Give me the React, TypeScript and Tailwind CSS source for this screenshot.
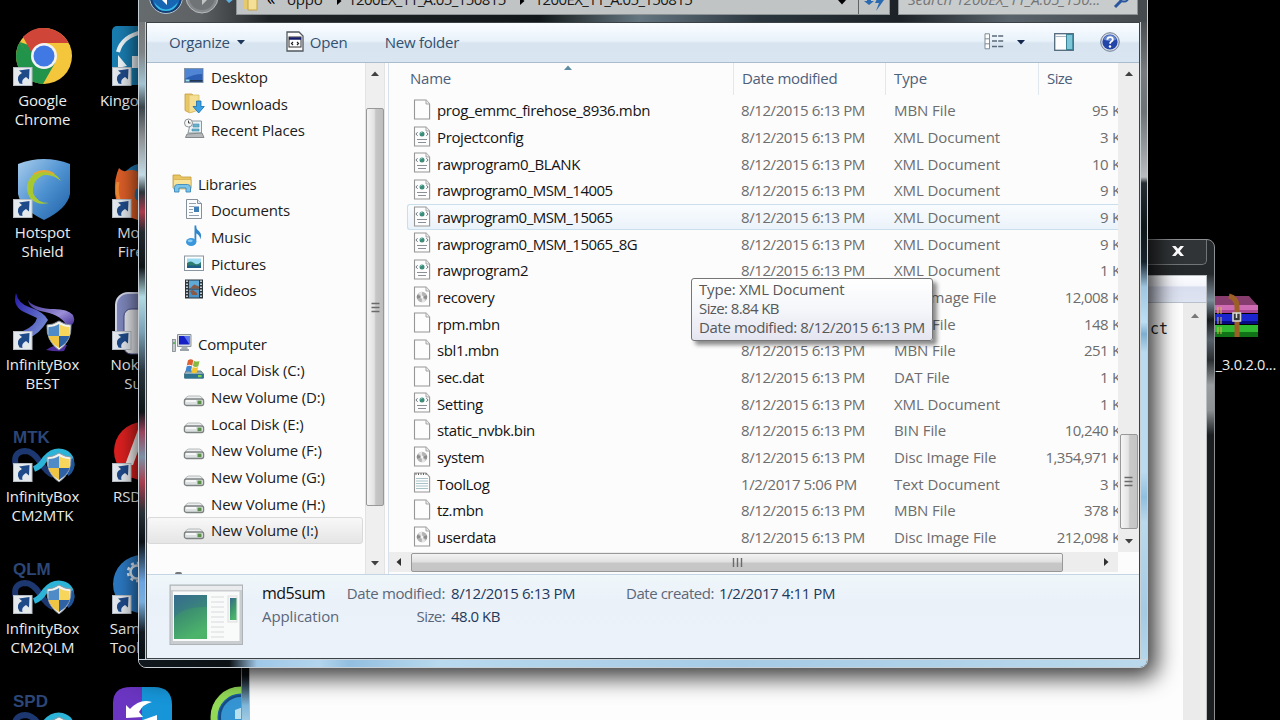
import type { ReactNode } from "react";

type FileKind = "blank" | "xml" | "disc" | "text";
type FileRow = { name: string; kind: FileKind; date: string; type: string; size: string };

const D = "8/12/2015 6:13 PM";

const files: FileRow[] = [
  { name: "prog_emmc_firehose_8936.mbn", kind: "blank", date: D, type: "MBN File", size: "95" },
  { name: "Projectconfig", kind: "xml", date: D, type: "XML Document", size: "3" },
  { name: "rawprogram0_BLANK", kind: "xml", date: D, type: "XML Document", size: "10" },
  { name: "rawprogram0_MSM_14005", kind: "xml", date: D, type: "XML Document", size: "9" },
  { name: "rawprogram0_MSM_15065", kind: "xml", date: D, type: "XML Document", size: "9" },
  { name: "rawprogram0_MSM_15065_8G", kind: "xml", date: D, type: "XML Document", size: "9" },
  { name: "rawprogram2", kind: "xml", date: D, type: "XML Document", size: "1" },
  { name: "recovery", kind: "disc", date: D, type: "Disc Image File", size: "12,008" },
  { name: "rpm.mbn", kind: "blank", date: D, type: "MBN File", size: "148" },
  { name: "sbl1.mbn", kind: "blank", date: D, type: "MBN File", size: "251" },
  { name: "sec.dat", kind: "blank", date: D, type: "DAT File", size: "1" },
  { name: "Setting", kind: "xml", date: D, type: "XML Document", size: "1" },
  { name: "static_nvbk.bin", kind: "blank", date: D, type: "BIN File", size: "10,240" },
  { name: "system", kind: "disc", date: D, type: "Disc Image File", size: "1,354,971" },
  { name: "ToolLog", kind: "text", date: "1/2/2017 5:06 PM", type: "Text Document", size: "3" },
  { name: "tz.mbn", kind: "blank", date: D, type: "MBN File", size: "378" },
  { name: "userdata", kind: "disc", date: D, type: "Disc Image File", size: "212,098" },
];

function FileIcon({ kind }: { kind: FileKind }) {
  return (
    <svg className="h-[21px] w-[18px] shrink-0" viewBox="0 0 18 21">
      <path d="M1.5 1h11.5l3.6 4v15H1.5z" fill="#fdfdfd" stroke="#969696" strokeWidth="1.1" />
      {kind !== "text" && <path d="M13 1v4h3.6" fill="#eee" stroke="#a5a5a5" />}
      {kind === "xml" && (
        <>
          <path d="M4.600 6.200 2.900 8l1.700 1.800M13.400 6.200 15.100 8l-1.700 1.800" fill="none" stroke="#66727d" strokeWidth="1" />
          <circle cx="9" cy="8" r="2.500" fill="#3b8c78" />
          <path d="M7.400 7.400a2 2 0 0 1 2-1.300" stroke="#a8d9e0" fill="none" />
          <path d="M4 13.500h10M5 16.500h8" stroke="#8b8f98" strokeWidth="1.200" />
        </>
      )}
      {kind === "disc" && (
        <>
          <circle cx="9" cy="11" r="5.200" fill="#b4b4b4" />
          <path d="M9 11 5.200 7.200a5.400 5.400 0 0 1 4-1.500zM9 11l3.800 3.800a5.400 5.400 0 0 1-4 1.500z" fill="#e3e3e3" />
          <path d="M9 11 14 9.300a5.400 5.400 0 0 1-.400 4zM9 11 4 12.800a5.400 5.400 0 0 1 .200-4z" fill="#8b8b8b" />
          <circle cx="9" cy="11" r="1.500" fill="#f4f4f4" />
        </>
      )}
      {kind === "text" && (
        <>
          <path d="M3 1v2M5.500 1v2M8 1v2M10.500 1v2M13 1v2" stroke="#666" />
          <path d="M3 6.500h12M3 9h12M3 11.500h12M3 14h12M3 16.500h12" stroke="#a7c3c8" />
        </>
      )}
    </svg>
  );
}

function Drive() {
  return (
    <svg className="h-[22px] w-[22px] shrink-0" viewBox="0 0 22 22">
      <path d="M5.500 10h11q2.500.500 4 4h-19q1.500-3.500 4-4z" fill="#eceeee" stroke="#a6abab" strokeWidth=".8" />
      <rect x="1.400" y="13" width="19.200" height="6.500" rx="2" fill="#dde0e0" stroke="#7d8282" strokeWidth="1.300" />
      <path d="M3 15h10" stroke="#fff" strokeWidth="1.500" />
      <rect x="14.500" y="14.600" width="4" height="3.600" fill="#5a9148" />
    </svg>
  );
}

function NavIcon({ name }: { name: string }) {
  if (name === "drive") return <Drive />;
  if (name === "windrive")
    return (
      <svg className="h-[22px] w-[22px] shrink-0" viewBox="0 0 22 22">
        <path d="M3 13h15l2.500 3v4H1.500v-4z" fill="#8fabb5" stroke="#637d86" />
        <path d="M1.500 16h19v4.500h-19z" fill="#2f7391" />
        <rect x="15" y="17" width="3.600" height="2.200" fill="#7fd04d" />
        <path d="M5 2.200q3-1.800 5.300.100L9.200 7.800Q6.500 6 3.800 7.600z" fill="#dc6032" />
        <path d="M11 2.700q2.700 1.600 5.500.200l-1.200 5.400q-2.600 1.400-5.400-.200z" fill="#86b940" />
        <path d="M3.600 8.400q2.800-1.500 5.400.200l-1.200 5.400q-2.600-1.700-5.400-.200z" fill="#3f86cf" />
        <path d="M9.700 9q2.700 1.500 5.400.100l-1.200 5.300q-2.600 1.500-5.400 0z" fill="#f3c531" />
      </svg>
    );
  return (
    <svg className="h-[22px] w-[22px] shrink-0" viewBox="0 0 22 22">
      {name === "desktop" && (
        <>
          <rect x="1.500" y="3.500" width="18.500" height="14" fill="#2c5fb4" stroke="#8293a8" />
          <path d="M2 4h17.500v5Q10 9 2 14z" fill="#4f85d4" />
          <path d="M2 15.800h17.500" stroke="#24374f" strokeWidth="1.600" />
          <path d="M2.500 15.500h4" stroke="#9fe0e9" strokeWidth="2" />
        </>
      )}
      {name === "downloads" && (
        <>
          <path d="M2 2h7l2 2v15.500l-5 1-4-2z" fill="#e8c765" stroke="#c49b3c" strokeWidth=".8" />
          <path d="M6 3h10v15l-10 3z" fill="#f5df93" stroke="#d8bc6b" strokeWidth=".8" />
          <path d="M13.500 9h4.500v5.500h3.300L15.700 21 10 14.500h3.500z" fill="#3aa2e4" stroke="#1c6da8" strokeWidth=".8" />
        </>
      )}
      {name === "recent" && (
        <>
          <path d="M8 3h10.500v12H5z" fill="#e9f1f4" stroke="#8b989f" />
          <path d="M10 6h6v3h-6zM9 11h7v2H9z" fill="#69b2cf" stroke="#3f8aab" strokeWidth=".6" />
          <path d="m4 16 15-1 2 4.500H2.500z" fill="#b4b8bb" stroke="#85898c" />
          <circle cx="5.500" cy="5" r="4" fill="#f7f7f7" stroke="#8c9296" />
          <path d="M5.500 2.600V5h2" stroke="#444" fill="none" />
        </>
      )}
      {name === "libraries" && (
        <>
          <path d="M2 3h7l1.500 2H20v11H2z" fill="#e9c662" stroke="#c2993b" strokeWidth=".8" />
          <path d="M2.500 7.500h17.500V17H2.500z" fill="#f8e39b" stroke="#d2b057" strokeWidth=".8" />
          <path d="M3.500 20v-4.500q0-3 3-3h10q3 0 3 3V20h-4.500v-4H8v4z" fill="#7cc3ea" stroke="#3a88b9" strokeWidth=".9" />
        </>
      )}
      {name === "documents" && (
        <>
          <path d="M3.500 1.500h11l4 4v15h-15z" fill="#fbfcfd" stroke="#85909a" />
          <path d="M14.500 1.500v4h4" fill="#e1e8ee" stroke="#85909a" />
          <path d="M6 5.500h7M6 8.500h5M6 11.500h4M6 14.500h4M6 17.500h10" stroke="#92a2b3" />
          <rect x="11" y="8.500" width="5" height="5.500" fill="#3f7fb5" />
        </>
      )}
      {name === "music" && (
        <>
          <path d="M12.500.500q.300 3.500 3.800 6 3.200 3.500.800 8 .300-4.500-4.600-6.500z" fill="#2f86cc" />
          <rect x="11.500" y=".500" width="1.800" height="16.500" fill="#2f86cc" />
          <ellipse cx="8.200" cy="17" rx="5.200" ry="4" fill="#3a97dc" />
          <ellipse cx="7.200" cy="15.800" rx="2.500" ry="1.400" fill="#8accf3" />
        </>
      )}
      {name === "pictures" && (
        <>
          <rect x="1.500" y="4" width="19" height="14.500" fill="#fff" stroke="#8796a0" />
          <rect x="4" y="6.500" width="14" height="9.500" fill="#9cdcf2" />
          <path d="M4 11q4-3 7 0t7-1v6H4z" fill="#2f7d6f" />
          <path d="M4 13.500h14V16H4z" fill="#1d5c86" />
        </>
      )}
      {name === "videos" && (
        <>
          <rect x="2" y="1.500" width="18" height="19" fill="#2b353c" />
          <rect x="6" y="2.500" width="10" height="8" fill="#5fa9d8" />
          <rect x="6" y="11.500" width="10" height="8" fill="#4c93c8" />
          <path d="M9 8.500l2-2 5 2v2H7zM7 13l3-1 4 3v2H9z" fill="#8a5a48" />
          <path d="M4 2.500v18M18 2.500v18" stroke="#e6edf0" strokeWidth="1.600" strokeDasharray="1.500 1.500" />
        </>
      )}
      {name === "computer" && (
        <>
          <path d="M6.500 2.500H20v12H6.500z" fill="#d4dade" stroke="#8b959c" />
          <rect x="8" y="4" width="10.500" height="8.500" fill="#1620c4" />
          <path d="M13 4h5.500v8.500z" fill="#5b74ee" />
          <path d="M11 14.500h5l1 3h-7z" fill="#a7aeb3" />
          <path d="M9 18h9" stroke="#9aa3a9" strokeWidth="2" />
          <rect x="1.500" y="7.500" width="3" height="12" fill="#c3c9cc" stroke="#80878c" strokeWidth=".8" />
          <path d="M3 10v2" stroke="#45a73f" strokeWidth="1.500" />
        </>
      )}
    </svg>
  );
}

type NavEntry = { icon: string; label: string; root?: boolean; selected?: boolean } | null;

const nav: NavEntry[] = [
  { icon: "desktop", label: "Desktop" },
  { icon: "downloads", label: "Downloads" },
  { icon: "recent", label: "Recent Places" },
  null,
  { icon: "libraries", label: "Libraries", root: true },
  { icon: "documents", label: "Documents" },
  { icon: "music", label: "Music" },
  { icon: "pictures", label: "Pictures" },
  { icon: "videos", label: "Videos" },
  null,
  { icon: "computer", label: "Computer", root: true },
  { icon: "windrive", label: "Local Disk (C:)" },
  { icon: "drive", label: "New Volume (D:)" },
  { icon: "drive", label: "Local Disk (E:)" },
  { icon: "drive", label: "New Volume (F:)" },
  { icon: "drive", label: "New Volume (G:)" },
  { icon: "drive", label: "New Volume (H:)" },
  { icon: "drive", label: "New Volume (I:)", selected: true },
];

function Shield() {
  return (
    <g>
      <path d="M45 29q6 4 12 4 1 16-12 25Q32 49 33 33q6 0 12-4z" fill="#f3f3ee" stroke="#8c98a5" />
      <path d="M45 32v12H34.500q-.500-4 0-9 6 0 10.500-3z" fill="#4f8bc6" />
      <path d="M45 32v12h10.500q.500-4 0-9-6 0-10.500-3z" fill="#f8d65c" />
      <path d="M45 56V44H34.500q2 7 10.500 12z" fill="#f0c544" />
      <path d="M45 56V44h10.500q-2 7-10.500 12z" fill="#2f62a4" />
    </g>
  );
}

function Shortcut() {
  return (
    <g>
      <rect x="-.500" y="39.500" width="18.500" height="18" fill="#e4e9ee" stroke="#b6bcc4" />
      <path d="M5.500 55.500q-4.500-7 2.500-10.500L5 42.500l10.500-1.500-.500 10.500-3-2.500Q7 51.500 8.500 56z" fill="#1f4a8a" />
    </g>
  );
}

function InfinityMark({ label }: { label: string }) {
  return (
    <g fill="none" strokeWidth="6">
      <text x="-1" y="19" className="fill-[#2c4677] font-['Liberation_Sans'] text-[17px] font-bold" stroke="none">
        {label}
      </text>
      <path d="M2 42q-4-14 9-15 8 0 15 11t13 13" stroke="#1d3870" />
      <path d="M20 45q6-2 11-10 8-9 17-7 11 3 9 16" stroke="#2bb4d8" />
      <path d="M57 35q3 10-4 15" stroke="#1f539a" strokeWidth="5" />
    </g>
  );
}

function Art({ children, shortcut = true }: { children: ReactNode; shortcut?: boolean }) {
  return (
    <svg className="h-[58px] w-[60px] shrink-0 overflow-visible" viewBox="0 0 60 58">
      {children}
      {shortcut && <Shortcut />}
    </svg>
  );
}

function Cell({ art, lines }: { art: ReactNode; lines: string[] }) {
  return (
    <div className="flex h-[132px] w-[85px] shrink-0 flex-col items-center">
      <div className="translate-x-[1px]">{art}</div>
      <div className="mt-[5px] text-center text-[15px] leading-[19px] tracking-[-0.1px] whitespace-nowrap text-[#ececec]">
        {lines.map((l) => (
          <div key={l}>{l}</div>
        ))}
      </div>
    </div>
  );
}

function DesktopIcons() {
  return (
    <>
      <div className="absolute top-[28px] left-0 flex flex-col">
        <Cell
          lines={["Google", "Chrome"]}
          art={
            <Art>
              <circle cx="30" cy="28" r="28" fill="#f3c63c" />
              <path d="M5.800 14A28 28 0 0 0 29 56l12-21-22-1z" fill="#22934a" />
              <path d="M5.800 14 18 34l5-14z" fill="#22934a" />
              <path d="M9 9 19 27l11-12h24.500A28 28 0 0 0 9 9z" fill="#cf4639" />
              <circle cx="30" cy="28" r="13" fill="#f3f3f3" />
              <circle cx="30" cy="28" r="10.500" fill="#4079e4" />
            </Art>
          }
        />
        <Cell
          lines={["Hotspot", "Shield"]}
          art={
            <Art>
              <defs>
                <linearGradient id="hs" x2="1" y2="1">
                  <stop stopColor="#a9cdec" />
                  <stop offset=".5" stopColor="#4f93d2" />
                  <stop offset="1" stopColor="#1e5fa6" />
                </linearGradient>
              </defs>
              <path d="M30-1q13 0 26 5v30Q53 49 30 60 7 49 4 34V4Q17-1 30-1z" fill="url(#hs)" />
              <path d="M47 21Q37 6 21 13 8 24 16 38q7 8 19 5-12 0-16-10-1-14 11-18 9-1 17 6z" fill="#a8c832" />
              <path d="M20 14q10-6 20 0" stroke="#e5a836" strokeWidth="2" fill="none" />
            </Art>
          }
        />
        <Cell
          lines={["InfinityBox", "BEST"]}
          art={
            <Art>
              <defs>
                <linearGradient id="ib" x2="1" y2="1">
                  <stop stopColor="#2418a8" />
                  <stop offset="1" stopColor="#7f9ad8" />
                </linearGradient>
                <linearGradient id="ip" x2="1" y2="1">
                  <stop stopColor="#3a3090" />
                  <stop offset=".6" stopColor="#9c8fd8" />
                  <stop offset="1" stopColor="#3b2590" />
                </linearGradient>
              </defs>
              <path d="M2 1q-4 13 8 19l13 6q-2 8-14 13l6 6q9-1 19-17Q30 20 15 15 4 11 2 1z" fill="url(#ib)" />
              <path d="M14 8q4 7 22 9 17-1 23 6 4 8-5 13-6-13-23-16Q15 17 14 8z" fill="url(#ip)" />
              <path d="M32 58q8-6 21-5l-3 6q-8 1-18-1z" fill="#4d2c9c" />
              <Shield />
            </Art>
          }
        />
        <Cell lines={["InfinityBox", "CM2MTK"]} art={<Art><InfinityMark label="MTK" /><Shield /></Art>} />
        <Cell lines={["InfinityBox", "CM2QLM"]} art={<Art><InfinityMark label="QLM" /><Shield /></Art>} />
        <Cell lines={[]} art={<Art><InfinityMark label="SPD" /><Shield /></Art>} />
      </div>
      <div className="absolute top-[28px] left-[99px] flex flex-col">
        <Cell
          lines={["Kingo ROOT"]}
          art={
            <Art>
              <rect x="-1" y="-2" width="58" height="59" rx="5" fill="#1a7db0" />
              <path d="M5 24q4-16 25-20" stroke="#eef6fa" strokeWidth="4" fill="none" />
              <path d="m5 27 9 11-9 2zM19 28h9v12h-9z" fill="#eef6fa" />
            </Art>
          }
        />
        <Cell
          lines={["Mozilla", "Firefox"]}
          art={
            <Art>
              <circle cx="32" cy="30" r="27" fill="#2478b0" />
              <path d="M6 8q3 4 7 3 9-3 14 3l-3 5 7 8-8 2q-5 12 8 14v18Q5 58 2 34 1 18 6 8z" fill="#dd5f28" />
              <path d="M5 22q-4 20 12 30" stroke="#ec8a35" strokeWidth="3" fill="none" />
            </Art>
          }
        />
        <Cell
          lines={["Nokia PC", "Suite"]}
          art={
            <Art>
              <rect x="3" y="1" width="50" height="56" rx="12" fill="#7f88bd" stroke="#d3d7eb" strokeWidth="2" />
              <rect x="11" y="17" width="34" height="45" rx="7" fill="#e7e9ee" stroke="#454d84" />
            </Art>
          }
        />
        <Cell
          lines={["RSD Lite"]}
          art={
            <Art>
              <circle cx="30" cy="27" r="29" fill="#dc2020" />
              <path d="m26 3-14 38h8l8-22z" fill="#f4efef" />
            </Art>
          }
        />
        <Cell
          lines={["Samsung", "Tool PRO"]}
          art={
            <Art>
              <circle cx="29" cy="28" r="29" fill="#2b78c0" />
              <circle cx="24" cy="16" r="6.500" fill="none" stroke="#dce9f4" strokeWidth="2.500" />
              <circle cx="24" cy="16" r="9" fill="none" stroke="#dce9f4" strokeWidth="2.500" strokeDasharray="3 3" />
            </Art>
          }
        />
        <Cell
          lines={[]}
          art={
            <Art shortcut={false}>
              <path d="M30-1v58H0V15Q0-1 18-1z" fill="#6a35c0" />
              <path d="M29-1h12q18 0 18 18v40H29z" fill="#1695d8" />
              <path d="M13 30V17l4 4q10-11 22-7-9 2-13 10l4 5zM27 33l17-6v13H29z" fill="#fff" />
            </Art>
          }
        />
      </div>
      <div className="absolute top-[688px] left-[200px]">
        <Art shortcut={false}>
          <circle cx="41" cy="29" r="27" fill="#1b5f9f" stroke="#93da57" strokeWidth="7" />
          <circle cx="41" cy="29" r="21" fill="#3595d2" stroke="#164a82" strokeWidth="2" />
          <path d="m35 22 8-3v12h-8z" fill="#b9e0ee" />
        </Art>
      </div>
      <div className="absolute top-[293px] left-[1201px] flex w-[75px] flex-col items-end">
        <svg className="mr-[17px] h-[48px] w-[56px]" viewBox="0 0 56 48">
          <path d="M0 3h46l9 10H6z" fill="#863c6c" />
          <path d="M0 12h55v8H0z" fill="#cf6bb2" />
          <path d="M0 17h55v3H0z" fill="#a94691" />
          <path d="M0 21h55v10H0z" fill="#1a25d0" />
          <path d="M0 28h55v3H0z" fill="#070c82" />
          <path d="M0 32h55v11H0z" fill="#2fba32" />
          <path d="M0 39h55v5H0z" fill="#117317" />
          <path d="M26 3q8 2 8 11v30" stroke="#9c6027" strokeWidth="5" fill="none" />
          <path d="M15 14v7M18 14v7M15 24v7M18 24v7M15 34v7M18 34v7" stroke="#d7bc52" />
          <rect x="30" y="20" width="7.500" height="8" fill="#383838" stroke="#d3d3c9" strokeWidth="1.600" />
          <path d="M33.500 20v5" stroke="#ddd" strokeWidth="1.500" />
        </svg>
        <div className="mt-[14px] text-[14.500px] leading-[19px] tracking-[-0.2px] whitespace-nowrap text-[#ececec]">_3.0.2.0...</div>
      </div>
    </>
  );
}

function Tri({ dir, className = "" }: { dir: "up" | "down" | "left" | "right"; className?: string }) {
  const d = { up: "M1 7 5 2.500 9 7z", down: "M1 3l4 4.500L9 3z", left: "M7 1 2.500 5 7 9z", right: "M3 1l4.500 4L3 9z" }[dir];
  return (
    <svg className={`h-[10px] w-[10px] shrink-0 ${className}`} viewBox="0 0 10 10">
      <path d={d} fill="currentColor" />
    </svg>
  );
}

function Grip({ vertical = false }: { vertical?: boolean }) {
  return (
    <svg className="h-[11px] w-[11px]" viewBox="0 0 11 11">
      {vertical ? (
        <path d="M1.500 1v9M5.500 1v9M9.500 1v9" stroke="#6a6a6a" strokeWidth="1.400" />
      ) : (
        <path d="M1.500 1.500h8M1.500 5.500h8M1.500 9.500h8" stroke="#6a6a6a" strokeWidth="1.400" />
      )}
    </svg>
  );
}

function NotepadWindow() {
  return (
    <div className="absolute top-[239px] left-[241px] flex h-[500px] w-[974px] flex-col rounded-t-[8px] border border-[#8d9092] bg-[#26292b]">
      <div className="flex h-[35px] shrink-0 justify-end pr-[7px]">
        <div className="flex h-[25px] w-[90px] items-center justify-end rounded-b-[5px] border border-t-0 border-[#717577] bg-[#303436] pr-[21px] pb-[3px]">
          <svg className="h-[12px] w-[14px]" viewBox="0 0 14 12">
            <path d="M1 1h3.500L7 3.800 9.500 1H13L8.900 6 13 11H9.500L7 8.200 4.500 11H1l4.100-5z" fill="#fff" />
          </svg>
        </div>
      </div>
      <div className="flex min-h-0 flex-1">
        <div className="h-full w-[7px] shrink-0 bg-[linear-gradient(#0a0d0f_0px,#0a0d0f_400px,#7fb5d8_430px,#c1e0ee_460px)]" />
        <div className="flex min-w-0 flex-1 flex-col border-x border-t border-[#b9bec2] bg-[#fdfdfd]">
          <div className="h-[27px] shrink-0 border-b border-[#b8c1cb] bg-[linear-gradient(#fbfcfe_0%,#f2f4fb_38%,#d9deef_42%,#dfe4f2_100%)]" />
          <div className="flex min-h-0 flex-1">
            <div className="flex-1 pt-[16px] pr-[15px] text-right font-['DejaVu_Sans_Mono'] text-[15px] leading-[20px] text-[#222]">ct</div>
            <div className="flex w-[23px] justify-center bg-[#ebebeb] pt-[8px] text-[#777]">
              <Tri dir="up" />
            </div>
          </div>
        </div>
        <div className="w-[7px] shrink-0 bg-[linear-gradient(#2b2e30_0px,#7c8d9b_25px,#16181a_45px,#57606a_65px,#2a2d30_85px,#9a9da0_110px,#8f9295_135px,#1b1d1f_160px,#1b1d1f_100%)]" />
      </div>
    </div>
  );
}

function Crumb({ children }: { children: ReactNode }) {
  return <span className="-translate-y-[1px] text-[15px] tracking-[-0.6px] whitespace-nowrap text-[#181818]">{children}</span>;
}

function TitleArea() {
  return (
    <div className="flex h-[81px] shrink-0 items-end bg-[linear-gradient(90deg,#666b6d_0px,#5e6264_60px,#202426_130px,#121819_400px,#657681_500px,#2b363e_620px,#1c2227_760px,#59636b_870px,#454a4e_1000px)] pr-[9px] pb-[7px] pl-[10px]">
      <div className="flex h-[34px] w-[86px] shrink-0 items-end">
        <svg className="h-[36px] w-[86px]" viewBox="0 0 86 36">
          <circle cx="17" cy="18" r="16.500" fill="#153e74" stroke="#b3c5d0" />
          <circle cx="17" cy="18" r="14" fill="#1766b4" />
          <path d="M5 23q12 15 24 0-3 9-12 9T5 23z" fill="#37bde8" />
          <path d="m18 10-8 8 8 8v-5h8v-6h-8z" fill="#fff" />
          <circle cx="53" cy="18" r="16" fill="#85898b" stroke="#b9bcbd" />
          <circle cx="53" cy="18" r="13" fill="#707476" />
          <path d="m53 10 8 8-8 8v-5h-8v-6h8z" fill="#c2c5c6" />
          <path d="m76 20 4 4 5-4z" fill="#5cb0df" />
        </svg>
      </div>
      <div className="ml-[1px] flex h-[30px] w-[654px] shrink-0 items-center border border-[#8d9294] bg-[#c1c4c5] pl-[5px]">
        <svg className="h-[21px] w-[18px]" viewBox="0 0 18 21">
          <path d="M2 1h8v18H2z" fill="#e5c96d" />
          <path d="M6 5h9v15H6z" fill="#f3e096" stroke="#c4a448" />
        </svg>
        <span className="ml-[7px] w-[20px] -translate-y-[1px] text-[17px]">«</span>
        <span className="w-[47px]">
          <span className="block -translate-y-[1px] text-[15px] tracking-[-0.2px] text-[#181818]">oppo</span>
        </span>
        <Tri dir="right" className="mr-[4px] translate-y-[1px]" />
        <Crumb>1200EX_11_A.05_150815</Crumb>
        <Tri dir="right" className="mr-[8px] ml-[11px] translate-y-[1px]" />
        <Crumb>1200EX_11_A.05_150815</Crumb>
        <div className="ml-auto flex h-full items-center">
          <Tri dir="down" className="mr-[11px] translate-y-[2px]" />
          <div className="flex h-full w-[31px] items-center justify-center border-l border-[#5d6264]">
            <svg className="h-[22px] w-[22px]" viewBox="0 0 22 22">
              <path d="m1 12 5 4 5-4H8V7H4v5zM17 4l-5 10h4l-3 8 8-11h-4l3-7z" fill="#2a6ab0" />
            </svg>
          </div>
        </div>
      </div>
      <div className="ml-[8px] flex h-[30px] flex-1 items-center justify-between border border-[#8d9294] bg-[#c9cccc] pr-[6px] pl-[9px]">
        <span className="-translate-y-[1px] text-[15px] tracking-[-0.15px] whitespace-nowrap text-[#737576] italic">Search 1200EX_11_A.05_150...</span>
        <svg className="h-[18px] w-[18px]" viewBox="0 0 18 18">
          <circle cx="11" cy="6" r="4.500" fill="none" stroke="#28559e" strokeWidth="2" />
          <path d="m8 10-6 6" stroke="#28559e" strokeWidth="3" />
        </svg>
      </div>
    </div>
  );
}

function Toolbar() {
  return (
    <div className="flex h-[40px] shrink-0 items-center border-b border-[#a9bccd] bg-[linear-gradient(#fafdff_0%,#e9f2fa_45%,#d8e5f0_52%,#d9e6f2_100%)] pr-[19px] pb-[2px] pl-[22px] text-[15px] text-[#34506f]">
      <span className="tracking-[-0.25px]">Organize</span>
      <Tri dir="down" className="ml-[6px] text-[#1e3758]" />
      <svg className="ml-[40px] h-[21px] w-[18px]" viewBox="0 0 18 21">
        <path d="M1 1h12l4 4v15H1z" fill="#fbfbfb" stroke="#52585e" strokeWidth="1.300" />
        <rect x="3" y="6" width="12" height="10" fill="#fff" stroke="#333" />
        <path d="M3 7.500h12" stroke="#151c66" strokeWidth="2.500" />
        <path d="m7 11-1.500 1.500L7 14M11 11l1.500 1.500L11 14" stroke="#222" fill="none" strokeWidth="1.200" />
      </svg>
      <span className="ml-[6px] w-[75px] tracking-[-0.2px]">Open</span>
      <span className="tracking-[-0.25px]">New folder</span>
      <svg className="ml-auto h-[17px] w-[20px]" viewBox="0 0 20 17">
        <path d="M1 .800h4.500v15H1zM1 5.800h4.500M1 10.800h4.500" fill="#fff" stroke="#7e8a94" />
        <path d="M8 3h12M8 8h12M8 13.500h12" stroke="#5a6878" strokeWidth="1.300" strokeDasharray="5 1.200" />
      </svg>
      <Tri dir="down" className="ml-[12px] text-[#14264b]" />
      <svg className="ml-[28px] h-[18px] w-[20px]" viewBox="0 0 20 18">
        <rect x=".700" y=".700" width="18.600" height="16.600" fill="#fdfdfd" stroke="#51687b" strokeWidth="1.300" />
        <path d="M1 3.500h11" stroke="#a9b8c2" />
        <rect x="12.500" y="1.500" width="6.200" height="15" fill="#7cc6d8" stroke="#3b8299" />
      </svg>
      <svg className="ml-[26px] h-[20px] w-[20px]" viewBox="0 0 20 20">
        <circle cx="10" cy="10" r="9.300" fill="#d3dae4" stroke="#727f93" />
        <circle cx="10" cy="10" r="7.600" fill="#2445a8" />
        <path d="M3.500 7.500a7 7 0 0 1 13 0q-6 3-13 0z" fill="#6585d0" />
        <path d="M7.300 7.800q.200-2.600 2.800-2.600t2.700 2.200q0 1.500-1.700 2.300-1 .500-1 2" fill="none" stroke="#fff" strokeWidth="1.800" />
        <circle cx="10" cy="14.500" r="1.200" fill="#fff" />
      </svg>
    </div>
  );
}

function NavPane() {
  return (
    <div className="flex w-[238px] shrink-0">
      <div className="flex w-[218px] shrink-0 flex-col overflow-hidden pt-[0.500px]">
        {nav.map((n, i) =>
          n ? (
            <div
              key={i}
              className={`flex h-[26.680px] w-[216px] shrink-0 items-center rounded-[3px] border whitespace-nowrap ${
                n.root ? "pl-[23px] tracking-[-0.25px]" : "pl-[35px] tracking-[-0.15px]"
              } ${n.selected ? "border-[#d9d9d9] bg-[linear-gradient(#f8f8f8,#e5e5e5)]" : "border-transparent"}`}
            >
              <span className={n.icon === "drive" ? "" : "-translate-y-[1px]"}>
                <NavIcon name={n.icon} />
              </span>
              <span className={n.root ? "ml-[5px]" : "ml-[6px]"}>{n.label}</span>
            </div>
          ) : (
            <div key={i} className="h-[26.680px] shrink-0" />
          ),
        )}
        <div className="mt-[28px] ml-[28px] h-[2px] w-[7px] shrink-0 rounded-t-full bg-[#73787b]" />
      </div>
      <div className="flex w-[20px] flex-col items-center border-x border-[#e3e3e3] bg-[#efefef] text-[#404040]">
        <Tri dir="up" className="mt-[6px]" />
        <div className="mt-[29px] flex h-[398px] w-[18px] shrink-0 items-center justify-center rounded-[2px] border border-[#989898] bg-[linear-gradient(90deg,#f4f4f4,#e2e2e2_45%,#c6c6c6_55%,#bdbdbd)]">
          <Grip />
        </div>
        <Tri dir="down" className="mt-auto mb-[6px]" />
      </div>
    </div>
  );
}

function FileList() {
  return (
    <div className="ml-[3px] flex min-w-0 flex-1 flex-col border-l border-[#d9e2ea]">
      <div className="flex h-[489px] shrink-0">
        <div className="w-[729px] shrink-0 overflow-hidden">
          <div className="flex h-[32px] text-[#4c607a]">
            <div className="relative w-[345px] border-r border-[#dfe8ef] pt-[4px] pl-[21px] tracking-[-0.25px]">
              Name
              <Tri dir="up" className="absolute top-0 left-[174px] text-[#5d8ca0]" />
            </div>
            <div className="w-[152px] border-r border-[#dfe8ef] pt-[4px] pl-[8px] tracking-[-0.3px]">Date modified</div>
            <div className="w-[153px] border-r border-[#dfe8ef] pt-[4px] pl-[8px] tracking-[-0.1px]">Type</div>
            <div className="pt-[4px] pl-[8px] tracking-[-0.6px]">Size</div>
          </div>
          <div className="mt-[2px] ml-[18px]">
            {files.map((f) => (
              <div
                key={f.name}
                className={`flex h-[26.680px] items-center rounded-l-[3px] border border-r-0 whitespace-nowrap ${
                  f.name === "rawprogram0_MSM_15065"
                    ? "border-[#c9dfec] bg-[linear-gradient(#fafcfe,#eaf3fa)]"
                    : "border-transparent"
                }`}
              >
                <div className="flex w-[333px] shrink-0 items-center pl-[5px] text-[#141414]">
                  <span className="-translate-y-[1px]">
                    <FileIcon kind={f.kind} />
                  </span>
                  <span className={`ml-[6px] ${f.name.includes("MSM") ? "tracking-[-0.530px]" : "tracking-[-0.38px]"}`}>{f.name}</span>
                </div>
                <div className="w-[153px] shrink-0 tracking-[-0.42px] text-[#6d6d6d]">{f.date}</div>
                <div className="w-[123px] shrink-0 tracking-[-0.080px] text-[#6d6d6d]">{f.type}</div>
                <div className="w-[91px] shrink-0 text-right tracking-[-0.580px] text-[#6d6d6d]">{f.size}</div>
                <div className="ml-[4px] shrink-0 text-[#6d6d6d]">K</div>
              </div>
            ))}
          </div>
        </div>
        <div className="flex flex-1 flex-col items-center bg-[#ededed] text-[#404040]">
          <Tri dir="up" className="mt-[6px]" />
          <div className="mt-auto flex h-[95px] w-[18px] shrink-0 items-center justify-center rounded-[2px] border border-[#989898] bg-[linear-gradient(90deg,#f5f5f5,#e4e4e4_45%,#c8c8c8_55%,#c4c4c4)]">
            <Grip />
          </div>
          <Tri dir="down" className="mt-[7px] mb-[6px]" />
        </div>
      </div>
      <div className="flex h-[20px] w-[729px] shrink-0 items-center bg-[#ededed] text-[#303030]">
        <Tri dir="left" className="ml-[5px]" />
        <div className="ml-[7px] flex h-[19px] w-[652px] items-center justify-center rounded-[2px] border border-[#989898] bg-[linear-gradient(#f3f3f3,#e1e1e1_45%,#c7c7c7_55%,#c5c5c5)]">
          <Grip vertical />
        </div>
        <Tri dir="right" className="mr-[7px] ml-auto" />
      </div>
    </div>
  );
}

function DetailsPane() {
  return (
    <div className="flex min-h-0 flex-1 border-t border-[#c5d5e3] bg-[linear-gradient(#eff7fa,#ebf1f9_30%,#ecf2fa)] pl-[22px]">
      <svg className="mt-[9px] h-[62px] w-[75px] shrink-0" viewBox="0 0 75 62">
        <defs>
          <linearGradient id="wall" x2=".4" y2="1">
            <stop stopColor="#38698f" />
            <stop offset=".5" stopColor="#3d926f" />
            <stop offset="1" stopColor="#4cb36b" />
          </linearGradient>
        </defs>
        <rect x="1" y="1" width="72.500" height="59.500" fill="#c9cdd0" stroke="#aeb3b7" />
        <path d="M2 2h71v4H2z" fill="#e9ebed" />
        <rect x="4" y="7.500" width="66.500" height="49.500" fill="#f9fafa" />
        <rect x="5" y="11" width="33" height="44" fill="url(#wall)" />
        <path d="M5 34q9-12 33-11V11H5z" fill="#346e91" opacity=".4" />
        <path d="M42 13h13M42 18h13M42 23h13M42 28h13M42 33h13M42 38h13M42 43h13M42 48h13M42 53h13" stroke="#e3e5e6" strokeWidth="1.500" />
        <rect x="59" y="12" width="9" height="26" fill="#f5f5f5" stroke="#ddd" />
        <rect x="61" y="14" width="6.500" height="22" fill="url(#wall)" />
      </svg>
      <div className="mt-[7px] ml-[18px] grid h-[46px] grid-cols-[75px_108px_175px_93px_150px] grid-rows-2 items-center leading-[23px] whitespace-nowrap text-[#1e395b]">
        <span className="text-[16px] tracking-[-0.5px] text-[#111]">md5sum</span>
        <span className="text-right tracking-[-0.35px] text-[#5a6779]">Date modified:</span>
        <span className="pl-[6px] tracking-[-0.4px]">{D}</span>
        <span className="pl-[6px] tracking-[-0.45px] text-[#5a6779]">Date created:</span>
        <span className="pl-[6px] tracking-[-0.4px]">1/2/2017 4:11 PM</span>
        <span className="tracking-[-0.1px] text-[#5a6779]">Application</span>
        <span className="text-right tracking-[-0.6px] text-[#5a6779]">Size:</span>
        <span className="pl-[6px] tracking-[-0.5px]">48.0 KB</span>
      </div>
    </div>
  );
}

function Tooltip() {
  return (
    <div className="absolute top-[278px] left-[691px] h-[63px] w-[242px] rounded-[3px] border border-[#767676] bg-[linear-gradient(#ffffff,#f5f6fa_50%,#e4e5f0)] pt-[1px] pl-[7px] text-[15px] leading-[19px] whitespace-nowrap text-[#575757] shadow-[4px_4px_4px_rgba(0,0,0,0.45)]">
      <div className="tracking-[-0.15px]">Type: XML Document</div>
      <div className="tracking-[-0.6px]">Size: 8.84 KB</div>
      <div className="tracking-[-0.38px]">Date modified: 8/12/2015 6:13 PM</div>
    </div>
  );
}

function ExplorerWindow() {
  return (
    <div className="absolute top-[-60px] left-[138px] flex h-[728px] w-[1010px] flex-col overflow-hidden rounded-[8px] border border-[#c5cfd5] bg-[#20272d] shadow-[4px_5px_22px_5px_rgba(0,0,0,0.75)]">
      <TitleArea />
      <div className="flex min-h-0 flex-1">
        <div className="w-[7px] shrink-0 border-r border-[#c5cbd0] bg-[linear-gradient(#77797a_0px,#7e8385_30px,#a3c4d2_62px,#3a444b_85px,#8c8f91_115px,#c3dbe5_153px,#2b353b_170px,#a83b4d_190px,#222a30_210px,#0e1316_245px,#b2dae3_275px,#7ba2b5_310px,#27333d_350px,#0f1518_390px,#98435d_410px,#7c91a5_435px,#a83e50_460px,#283137_490px,#0a1015_520px,#6ba4df_560px,#77aede_580px,#121a20_610px,#080d11_100%)]" />
        <div className="flex min-w-0 flex-1 flex-col border border-[#3a4246] bg-[#fcfcfc] text-[15px] leading-[22px] text-[#1c1c1c]">
          <Toolbar />
          <div className="flex h-[511px] shrink-0">
            <NavPane />
            <FileList />
          </div>
          <DetailsPane />
        </div>
        <div className="w-[7px] shrink-0 border-l border-[#c8d1d6] bg-[linear-gradient(#4a4e50_0px,#777b7e_50px,#6d7275_90px,#b8bcbe_155px,#262d32_161px,#101719_205px,#16242d_240px,#9dc5e2_265px,#bbdff5_300px,#7daed0_312px,#b9daf0_330px,#b9daf0_450px,#8fbfe0_475px,#bad9ed_500px,#a4cae4_590px,#b4d6eb_100%)]" />
      </div>
      <div className="h-[8px] shrink-0 border-t border-[#cbd4da] bg-[linear-gradient(90deg,#11181d_0px,#0b1115_90px,#9fc8e8_118px,#b3d5ed_180px,#93bee0_210px,#b8d9ee_300px,#a6cbe5_600px,#bad9ec_100%)]" />
    </div>
  );
}

export default function App() {
  return (
    <div className="relative h-[720px] w-[1280px] overflow-hidden bg-black font-['Open_Sans','Noto_Sans',sans-serif]">
      <DesktopIcons />
      <NotepadWindow />
      <ExplorerWindow />
      <Tooltip />
    </div>
  );
}
